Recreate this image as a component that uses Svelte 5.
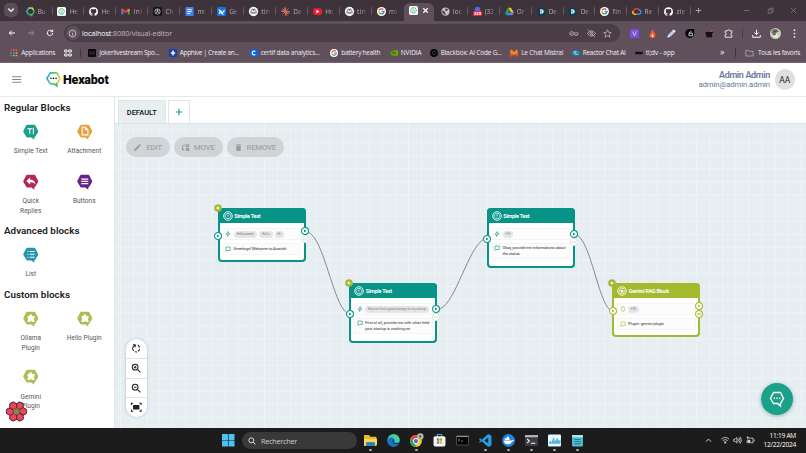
<script>
  // Spreads or tightens the letters so a label fills the given width.
  function fit(node, width) {
    const natural = node.getBoundingClientRect().width;
    const count = node.textContent.length;
    if (width && count) node.style.letterSpacing = `${(width - natural) / count}px`;
  }

  const tabs = [
    ['hexring', 'Bu'], ['hexfav', 'He'], ['github', 'He'], ['gmail', 'Inl'], ['gpt', 'Ch'],
    ['docs', 'mo'], ['bird', 'Ge'], ['ball', 'tin'], ['claude', 'Da'], ['youtube', 'Ho'],
    ['ball', 'tin'], ['google', 'mi'], ['hexfav', '', true], ['globe', 'loc'], ['badge', '(32'],
    ['drive', 'Or'], ['deep', 'De'], ['deep', 'De'], ['google', 'fin'], ['cloud', 'Re'], ['github', 'zie']
  ];

  const bookmarks = [
    ['apps', 'Applications', 54, 34],
    ['grid', '', 24, 0],
    ['joker', 'Jokerlivestream Spo...', 80.5, 60],
    ['apphive', 'Apphive | Create an...', 81, 59],
    ['certif', 'certif data analytics...', 80.5, 59],
    ['google', 'battery health', 59.5, 39],
    ['nvidia', 'NVIDIA', 40, 21],
    ['black', 'Blackbox: AI Code G...', 80.5, 61],
    ['mistral', 'Le Chat Mistral', 61.5, 42],
    ['reactor', 'Reactor Chat AI', 63, 43],
    ['tldv', 'tl;dv - app', 60, 29]
  ];

  const groups = [
    { title: 'Regular Blocks', width: 66.5, cls: 'regular', items: [
      ['Simple Text', '#1ba089', 'text'], ['Attachment', '#e6a23f', 'file'],
      ['Quick Replies', '#b5265d', 'reply'], ['Buttons', '#66218c', 'lines']
    ] },
    { title: 'Advanced blocks', width: 75.5, cls: 'advanced', items: [['List', '#2695ae', 'list']] },
    { title: 'Custom blocks', width: 66, cls: 'custom', items: [
      ['Ollama Plugin', '#a9c052', 'puzzle'], ['Hello Plugin', '#a9c052', 'puzzle'], ['Gemini Plugin', '#a9c052', 'puzzle']
    ] }
  ];

  const nodes = [
    { x: 217.5, y: 207.5, h: 54, title: 'Simple Text', tw: 26, chips: [['Hello avanish', 23.5, 17], ['Hello', 13.5, 7.5], ['Hi', 9, 3]], lines: [['Greetings! Welcome to Avanish', 53]], left: 28.5, right: 23.5, flag: true },
    { x: 349, y: 282.5, h: 60, title: 'Simple Text', tw: 26, chips: [['Help me find a good strategy for my startup', 64, 58]], lines: [['First of all, provide me with what field', 64], ['your startup is working on.', 46]], left: 31, right: 26.5, flag: true },
    { x: 486.5, y: 207.5, h: 60, title: 'Simple Text', tw: 26, chips: [['+20', 10.5, 5]], lines: [['Okay, provide me informations about', 63], ['the status.', 18]], left: 31, right: 26.5 },
    { x: 612, y: 282.5, h: 54, title: 'Gemini RAG Block', tw: 40, green: true, chips: [['+20', 10.5, 5]], lines: [['Plugin: gemini-plugin', 36]], left: 28, right: 23.5, flag: true }
  ];

  const pinned = ['folder', 'edge', 'chrome', 'store', 'cmd', 'vscode', 'docker', 'term', 'monitor', 'notes'];
  const running = ['folder', 'chrome', 'vscode', 'docker', 'term', 'monitor', 'notes'];
</script>

{#snippet icon(kind)}
  <svg class="ico" viewBox="0 0 24 24" aria-hidden="true">
    {#if kind === 'hexring'}
      <path d="M7 3h10l5 9-5 8h-2v3l-4-3H7l-5-8z" fill="none" stroke="#39b86b" stroke-width="3.5" />
      <path d="M7 3h10l3 5" fill="none" stroke="#d8d932" stroke-width="3.5" /><path d="M7 3 2 12l3 5" fill="none" stroke="#29a8d8" stroke-width="3.5" />
    {:else if kind === 'hexfav'}
      <rect width="24" height="24" rx="4" fill="#f6fbf8" /><path d="M8 5h8l4 7-4 6h-2v2l-3-2H8l-4-6z" fill="none" stroke="#35b68e" stroke-width="2" /><path d="M8 5h8l3 5" fill="none" stroke="#b8d334" stroke-width="2" /><path d="M8 11h8M9 14h6" stroke="#53b9d1" stroke-width="1.6" />
    {:else if kind === 'github'}
      <path fill="#fff" d="M12 .5a11.8 11.8 0 0 0-3.7 23c.6.1.8-.3.8-.6v-2.2c-3.3.7-4-1.4-4-1.4-.5-1.4-1.3-1.8-1.3-1.8-1-.7.1-.7.1-.7 1.2.1 1.8 1.2 1.8 1.2 1 1.8 2.8 1.3 3.5 1 .1-.8.4-1.3.8-1.6-2.7-.3-5.5-1.3-5.5-5.9 0-1.3.5-2.4 1.2-3.2-.1-.3-.5-1.5.1-3.2 0 0 1-.3 3.3 1.2a11.5 11.5 0 0 1 6 0c2.3-1.5 3.3-1.2 3.3-1.2.7 1.7.3 2.9.1 3.2.8.8 1.2 1.9 1.2 3.2 0 4.6-2.8 5.6-5.5 5.9.4.4.8 1.1.8 2.2v3.3c0 .3.2.7.8.6A11.8 11.8 0 0 0 12 .5z" />
    {:else if kind === 'gmail'}
      <path d="M1 5v15h5V9z" fill="#4285f4" /><path d="M23 5v15h-5V9z" fill="#34a853" /><path d="M1 4h4l7 6 7-6h4v4l-11 8L1 8z" fill="#ea4335" /><path d="M18 9l5-4v4l-5 4z" fill="#fbbc04" />
    {:else if kind === 'gpt'}
      <rect width="24" height="24" rx="5" fill="#161618" /><g fill="none" stroke="#ddd" stroke-width="1.7"><circle cx="12" cy="12" r="7" /><path d="M12 5v8l6 3M6 8l6 4-5 5M18 8l-6 4" /></g>
    {:else if kind === 'docs'}
      <rect x="1" y="0" width="22" height="24" rx="3" fill="#3f83ed" /><path d="M6 7h12M6 12h12M6 17h8" stroke="#fff" stroke-width="2.4" />
    {:else if kind === 'bird'}
      <rect width="24" height="24" rx="4" fill="#1475e1" /><path d="M3 5l8 4 3 4 6-7v6l-5 4 4 4h-5l-4-4-6 4 3-8z" fill="#fff" />
    {:else if kind === 'ball'}
      <circle cx="12" cy="12" r="12.500" fill="#f3f3f3" /><path d="M8 9V6h8v3l3 2v5H5v-5z" fill="none" stroke="#33333a" stroke-width="1.600" /><path d="M9 15h6M12 6v5" stroke="#33333a" stroke-width="1.500" />
    {:else if kind === 'claude'}
      <path d="M12 1v22M1 12h22M4 4l16 16M20 4 4 20M8 1l8 22M1 8l22 8" stroke="#d97757" stroke-width="2.200" />
    {:else if kind === 'youtube'}
      <rect y="3" width="24" height="18" rx="5" fill="#f01832" /><path d="m9 7 8 5-8 5z" fill="#fff" />
    {:else if kind === 'google'}
      <circle cx="12" cy="12" r="12" fill="#fff" /><g fill="none" stroke-width="3.500"><path d="M17 7A7 7 0 0 0 6 9" stroke="#ea4335" /><path d="M6 9a7 7 0 0 0 0 6" stroke="#fbbc04" /><path d="M6 15a7 7 0 0 0 10 2" stroke="#34a853" /><path d="M16 17a7 7 0 0 0 3-5h-7" stroke="#4285f4" /></g>
    {:else if kind === 'globe'}
      <circle cx="12" cy="12" r="11" fill="#c9c1c7" /><path d="M3 9l6 2 2 5 2 5-5-1-5-6zM12 3l7 3-4 5-4-2z" fill="#4b3f49" />
    {:else if kind === 'badge'}
      <circle cx="12" cy="7" r="7.500" fill="#3f70e8" /><rect y="10" width="24" height="14" rx="3" fill="#e3263b" /><text x="12" y="20.500" font-size="11" font-weight="700" text-anchor="middle" fill="#fff">329</text>
    {:else if kind === 'drive'}
      <path d="M8 2h8l8 13h-8z" fill="#fbbc04" /><path d="M8 2 0 16l4 6 8-13z" fill="#20a464" /><path d="M8 15h16l-4 7H4z" fill="#4285f4" />
    {:else if kind === 'deep'}
      <circle cx="12" cy="12" r="11.500" fill="#093f55" /><path d="M8 6h4a6 6 0 0 1 0 12H8z" fill="#d8f3fa" /><path d="M11 9v6" stroke="#093f55" stroke-width="2" />
    {:else if kind === 'cloud'}
      <path d="M6 18a5 5 0 0 1-1-9 8 8 0 0 1 14-1" fill="none" stroke="#ea4335" stroke-width="4" /><path d="M18 8a5 5 0 0 1 0 11h-6" fill="none" stroke="#4285f4" stroke-width="4" /><path d="M12 19H6a5 5 0 0 1-3-8" fill="none" stroke="#fbbc04" stroke-width="4" />
    {:else if kind === 'apps'}
      <path d="M1 1h5v5H1z" fill="#ea4335" /><path d="M9 1h5v5H9zM17 1h5v5h-5z" fill="#e35d4f" /><path d="M1 9h5v5H1zM1 17h5v5H1z" fill="#34a853" /><path d="M9 9h5v5H9z" fill="#4285f4" /><path d="M17 9h5v5h-5zM17 17h5v5h-5zM9 17h5v5H9z" fill="#e8a91b" />
    {:else if kind === 'grid'}
      <path d="M2 3h7v6H2zM14 3h8v6h-8zM2 15h7v6H2zM14 15h8v6h-8z" fill="none" stroke="#eee" stroke-width="3" />
    {:else if kind === 'joker'}
      <rect width="24" height="24" rx="3" fill="#0c0b0c" /><path d="M6 9h12v6H6z" fill="none" stroke="#5b5659" stroke-width="1.500" />
    {:else if kind === 'apphive'}
      <rect width="24" height="24" rx="4" fill="#193f9c" /><path d="M12 4v16M5 12h14" stroke="#fff" stroke-width="3" /><circle cx="12" cy="12" r="5" fill="#dbe8ff" />
    {:else if kind === 'certif'}
      <circle cx="12" cy="12" r="12" fill="#0766e8" /><path d="M16 8a5.500 5.500 0 1 0 0 8" fill="none" stroke="#fff" stroke-width="3.500" />
    {:else if kind === 'nvidia'}
      <path d="M0 12q6-9 15-8h9v16H9Q3 18 0 12" fill="#69a800" /><path d="M5 12q5-7 12-1-5 8-9 2 3-3 6-1" fill="none" stroke="#345415" stroke-width="2" />
    {:else if kind === 'black'}
      <circle cx="12" cy="12" r="12" fill="#080808" /><circle cx="12" cy="12" r="5" fill="none" stroke="#444" stroke-width="2" />
    {:else if kind === 'mistral'}
      <path d="M1 3h5l6 7 6-7h5v19h-6v-8l-5 5-5-5v8H1z" fill="#ff8518" /><path d="M1 15h6v7H1zM17 15h6v7h-6z" fill="#e9451d" />
    {:else if kind === 'reactor'}
      <ellipse cx="12" cy="12" rx="12" ry="8" fill="#2286b7" /><circle cx="9" cy="10" r="5" fill="#62c5e7" /><path d="M9 16h10" stroke="#bce9f5" stroke-width="2" />
    {:else if kind === 'tldv'}
      <path d="M0 8h24v8H0z" fill="#30242d" /><path d="M3 12h18" stroke="#090708" stroke-width="4" />
    {/if}
  </svg>
{/snippet}

{#snippet glyph(kind)}
  <g fill="none" stroke="#fff" stroke-width="1.600">
    {#if kind === 'text'}<path d="M6.500 7.500h8M10.500 7.500v8M16 6v10" />
    {:else if kind === 'file'}<path d="M8 5h5l4 4v8H8zM13 5v4h4" />
    {:else if kind === 'reply'}<path d="M5 11 11 5.500v3.500q7 0 8.500 7-3-3.500-8.500-3v3.500z" fill="#fff" stroke="none" />
    {:else if kind === 'lines'}<path d="M6.500 8h11M6.500 11.500h11M6.500 15h11" stroke-width="2" />
    {:else if kind === 'list'}<path d="M7 7h1.500M7 11.500h1.500M7 16h1.500M10.500 7H18M10.500 11.500H18M10.500 16H18" />
    {:else}<path d="M7 8h3V7a2 2 0 1 1 4 0v1h4v3.500a2 2 0 0 0 0 3.500v2h-4l-1.500-2-1.500 2H7v-3a2 2 0 0 0 0-3.500z" fill="#fff" stroke="none" />{/if}
  </g>
{/snippet}

{#snippet port(green, faint)}
  <svg class="port" viewBox="0 0 10 10">
    <circle cx="5" cy="5" r="3.500" fill="#fff" stroke={faint && !green ? '#dfe4e5' : green ? '#a5b92f' : '#079487'} stroke-width="1.050" />
    {#if faint}<path d="M3 5h4" stroke={green ? '#a5b92f' : '#c3c9ca'} stroke-width="1.200" stroke-dasharray={green ? 'none' : '1 .5'} />
    {:else}<path d="M4 3.400 6.500 5 4 6.600z" fill={green ? '#a5b92f' : '#079487'} />{/if}
  </svg>
{/snippet}

<div class="screen">
  <div class="tabstrip">
    <div class="chev"><svg viewBox="0 0 10 10"><path d="m3 4 2 2 2-2" /></svg></div>
    {#each tabs as [kind, label, active], i}
      <div class="tab" class:active class:nosep={i === 11 || active}>
        {@render icon(kind)}
        {#if active}<svg class="close" viewBox="0 0 10 10"><path d="m2.500 2.500 5 5m0-5-5 5" /></svg>{:else}<span use:fit={label.length > 2 ? 9 : 8}>{label}</span>{/if}
      </div>
    {/each}
    <svg class="plus" viewBox="0 0 10 10"><path d="M5 2v6M2 5h6" /></svg>
    <div class="win">
      <svg viewBox="0 0 10 10"><path d="M2 5h6" /></svg>
      <svg viewBox="0 0 10 10"><path d="M2.500 4h4v4h-4zM4 4V2.500h4v4H6.500" /></svg>
      <svg viewBox="0 0 10 10"><path d="m2 2 6 6m0-6L2 8" /></svg>
    </div>
  </div>

  <div class="toolbar">
    <svg class="nav" viewBox="0 0 24 24"><path d="M21 12H4m7-7-7 7 7 7" /></svg>
    <svg class="nav dim" viewBox="0 0 24 24"><path d="M3 12h17m-7-7 7 7-7 7" /></svg>
    <svg class="nav" viewBox="0 0 24 24"><path d="M20 12a8 8 0 1 1-2.500-6M20 2v6h-6" /></svg>
    <div class="address">
      <div class="info"><svg viewBox="0 0 24 24"><circle cx="12" cy="12" r="9" /><path d="M12 11v6M12 7v1.500" /></svg></div>
      <span class="url" use:fit={90}><b>localhost</b>:8080/visual-editor</span>
      <svg class="ai key" viewBox="0 0 30 24"><circle cx="8" cy="12" r="6" /><circle cx="8" cy="12" r="1.500" /><path d="M14 10h13v5h-3v3h-5v-3h-5" /></svg>
      <svg class="ai" viewBox="0 0 24 24"><path d="M1 12q11-14 22 0-11 14-22 0M3 2l18 20" /><circle cx="12" cy="12" r="4" /></svg>
      <svg class="ai" viewBox="0 0 24 24"><path d="m12 2 3 7 7 .6-5.400 4.800L18.500 22 12 17.800 5.500 22l1.900-7.600L2 9.600 9 9z" /></svg>
    </div>
    <div class="ext">
      <svg viewBox="0 0 24 24"><rect width="24" height="24" rx="3" fill="#7950dc" /><path d="m7 7 5 11 5-12" fill="none" stroke="#d9c9ff" stroke-width="2.500" /></svg>
      <svg viewBox="0 0 24 24"><path d="M12 0q1 7 6 9 5 14-6 15Q0 22 5 11q3 0 3-4 3-2 4-7" fill="#f15a38" /><path d="M12 12q6 8 0 11-6-3 0-11" fill="#ffd66b" /></svg>
      <svg viewBox="0 0 24 24"><path d="M2 22 5 15 14 6l4 4-9 9z" fill="#a9c5ff" stroke="#fff" stroke-width="2" /><path d="m14 4 6 6 3-4-5-5z" fill="#f5f5ff" /></svg>
      <svg viewBox="0 0 24 24"><path d="M12 0h10v12a12 12 0 1 1-10-12" fill="#050505" /><path d="M8 11h9v7H8zM10 11V8a3 3 0 0 1 5 0" fill="none" stroke="#fff" stroke-width="2" /></svg>
      <svg viewBox="0 0 24 24"><path d="M1 8h13l8-5v6l-3 2v11H4z" fill="#16110f" /><path d="M15 7q4-6 8-4l-4 5z" fill="#bd7a24" /></svg>
      <svg viewBox="0 0 24 24"><path d="M3 5h6q0-3 3-3t3 3h6v6q-3 0-3 3t3 3v5H3v-6q3 0 3-3t-3-3z" fill="none" stroke="#eee" stroke-width="2.400" /></svg>
      <i></i>
      <svg viewBox="0 0 24 24"><path d="M12 2v13m-6-6 6 6 6-6M2 16v6h20v-6" fill="none" stroke="#fff" stroke-width="2.600" /></svg>
      <svg class="face" viewBox="0 0 24 24"><circle cx="12" cy="12" r="12" fill="#c9cec1" /><path d="M4 5q9-8 16 3l-5 1-5 6-7-4z" fill="#6e765f" /><path d="m7 18 7-6 4 7-6 3z" fill="#eceddf" /><path d="M9 8h5M7 14l5 1" stroke="#37362f" stroke-width="2" /></svg>
      <svg viewBox="0 0 24 24"><g fill="#eee"><circle cx="12" cy="3" r="2.300" /><circle cx="12" cy="12" r="2.300" /><circle cx="12" cy="21" r="2.300" /></g></svg>
    </div>
  </div>

  <div class="bookmarks">
    {#each bookmarks as [kind, label, w, tw]}
      <div class="bm" class:bar={kind === 'grid'} style:width="{w}px">{@render icon(kind)}{#if label}<span use:fit={tw}>{label}</span>{/if}</div>
    {/each}
    <div class="more">»</div>
    <div class="favs"><svg viewBox="0 0 24 24"><path d="M1 4h8l3 3h11v14H1z" /></svg><span use:fit={42}>Tous les favoris</span></div>
  </div>

  <header>
    <svg class="burger" viewBox="0 0 10 10"><path d="M0 2h10M0 5h10M0 8h10" /></svg>
    <svg class="logo" viewBox="0 0 32 34">
      <defs><linearGradient id="lg" x1="0" y1="0.2" x2="1" y2="0.5"><stop offset="0" stop-color="#28a8e0" /><stop offset=".5" stop-color="#64c66b" /><stop offset="1" stop-color="#dadd2b" /></linearGradient></defs>
      <path d="M9 3h14l7 12-6 10h-1v6l-6-5H9L2 15z" fill="none" stroke="url(#lg)" stroke-width="3.600" />
      <path d="M23 25v6l-6-5h-5" fill="none" stroke="#3fbd9d" stroke-width="3" />
      <g fill="#050505"><circle cx="10.500" cy="14.500" r="1.700" /><circle cx="16" cy="14.500" r="1.700" /><circle cx="21.500" cy="14.500" r="1.700" /></g>
    </svg>
    <span class="brand" use:fit={45.5}>Hexabot</span>
    <div class="user"><strong use:fit={51}>Admin Admin</strong><span use:fit={71.5}>admin@admin.admin</span></div>
    <div class="avatar">AA</div>
  </header>

  <main>
    <aside>
      {#each groups as g}
        <section class={g.cls}>
          <h2><span use:fit={g.width}>{g.title}</span></h2>
          <div class="blocks">
            {#each g.items as [name, color, kind]}
              <div class="block">
                <svg viewBox="0 0 24 25"><path d="M6.500 1h11q1 0 1.500 1l4.300 8q.7 1.500 0 3L19 20l-1.500 1v3.500L13 21H6.500q-1 0-1.500-1L.7 13q-.7-1.500 0-3L5 2q.5-1 1.500-1" fill={color} />{@render glyph(kind)}</svg>
                <span>{name}</span>
              </div>
            {/each}
          </div>
        </section>
      {/each}
      <svg class="flower" viewBox="0 0 40 40">
        {#each [30, 90, 150, 210, 270, 330] as a}
          <path d="M20 21 12.500 8 15.500 1.500Q20-.5 24.500 1.500L27.500 8z" transform="rotate({a} 20 20)" fill="#f0445b" stroke="#46243f" stroke-width="1.800" stroke-linejoin="round" />
        {/each}
        <circle cx="20" cy="20" r="6.500" fill="#9aa648" stroke="#46243f" stroke-width="1.300" /><circle cx="20" cy="20" r="3" fill="none" stroke="#4d5030" stroke-width="1.500" />
      </svg>
    </aside>

    <div class="work">
      <div class="flowtabs"><div class="ftab"><span use:fit={30}>DEFAULT</span></div><div class="fadd"><svg viewBox="0 0 10 10"><path d="M5 1v8M1 5h8" /></svg></div></div>
      <div class="canvas">
        <div class="actions">
          <button style:width="44px"><svg viewBox="0 0 24 24"><path d="M3 17.300V21h3.700L18 9.900l-3.800-3.800zM20.700 7a1 1 0 0 0 0-1.400l-2.300-2.300a1 1 0 0 0-1.400 0L15 5l3.800 3.800z" /></svg><span use:fit={15.5}>EDIT</span></button>
          <button style:width="48.5px"><svg viewBox="0 0 24 24"><path d="M13 3h9v8h-9zm2 3v1h5V6zM13 13h9v8h-9zM11 4v3a5 5 0 0 0-5 8h3l-4 6-5-6h3A8 8 0 0 1 11 4" /></svg><span use:fit={21}>MOVE</span></button>
          <button style:width="57.5px"><svg viewBox="0 0 24 24"><path d="M6 8h12v11q0 2-2 2H8q-2 0-2-2zM5 4h4l1-1h4l1 1h4v2.500H5z" /></svg><span use:fit={29.5}>REMOVE</span></button>
        </div>

        <svg class="edges" viewBox="115 124 691 304">
          <path d="M308 232C324 238 333 304 347 313M440 309C456 302 468 248 484 239M577 235C591 243 598 300 610 310" />
        </svg>

        {#each nodes as n}
          <article class="node" class:green={n.green} style:left="{n.x - 115}px" style:top="{n.y - 124}px" style:height="{n.h}px">
            <div class="nhead">
              <svg viewBox="0 0 20 20"><circle cx="10" cy="10" r="8.500" fill="none" stroke="#fff" stroke-width="1.800" /><path d="M7 5h6l3 5-3 5H7l-3-5z" fill="none" stroke="#fff" stroke-width="1.300" />{#if n.green}<path d="M7 8h6l-1 2 1 3H8z" fill="#fff" />{:else}<path d="M7.500 8h5M10 8v5" stroke="#fff" />{/if}</svg>
              <span use:fit={n.tw}>{n.title}</span>
            </div>
            <div class="row">
              <svg viewBox="0 0 12 12"><path d={n.green ? 'M4 1.500h4l2 4.500-2 4.500H4L2 6z' : 'M6.500 1 2 6.800h3.200L5 11l5-5.800H6.800z'} /></svg>
              {#each n.chips as [t, w, tw]}<div class="chip" style:width="{w}px"><span use:fit={tw}>{t}</span></div>{/each}
            </div>
            <div class="row msg" class:two={n.lines.length > 1}>
              <svg viewBox="0 0 12 12"><path d="M2 2h8.500v7H4L2 11z" /></svg>
              <div>{#each n.lines as [t, w]}<p><span use:fit={w}>{t}</span></p>{/each}</div>
            </div>
            <div class="pin" style:left="0.5px" style:top="{n.left}px">{@render port(n.green, false)}</div>
            <div class="pin" style:left="87px" style:top="{n.right + 8.3}px">{@render port(n.green, true)}</div>
            <div class="pin" style:left="87px" style:top="{n.right}px">{@render port(n.green, false)}</div>
            {#if n.flag}<svg class="flag" viewBox="0 0 10 10"><circle cx="5" cy="5" r="4.800" fill="#a5b936" /><path d="m3.500 3 4 2-4 2z" fill="#fff" /></svg>{/if}
          </article>
        {/each}

        <div class="zoom">
          <div><svg viewBox="0 0 24 24"><path d="M15.500 4.700a8 8 0 0 1 4 6M19.600 14a8 8 0 0 1-3.500 5M13.500 20.400a8 8 0 0 1-5-.7M6 18a8 8 0 0 1 2.500-12.700M5 3.500l5.500 1.300L8.500 10" /></svg></div>
          <div><svg viewBox="0 0 24 24"><circle cx="9.500" cy="9.500" r="6.500" /><path d="m14.500 14.500 7 7M6.500 9.500h6M9.500 6.500v6" /></svg></div>
          <div><svg viewBox="0 0 24 24"><circle cx="9.500" cy="9.500" r="6.500" /><path d="m14.500 14.500 7 7M6.500 9.500h6" /></svg></div>
          <div><svg viewBox="0 0 24 24"><path d="M1 7V3h4M19 3h4v4M1 17v4h4M19 21h4v-4" /><path d="M6 8h12v8H6z" fill="#202225" /></svg></div>
        </div>
        <div class="chat"><svg viewBox="0 0 32 34"><path d="M9 3h14l6 12-6 10v5l-6-5H9L3 15z" /><path d="M9.500 14.500h2.500M14.700 14.500h2.600M20 14.500h2.500" /></svg></div>
      </div>
    </div>
  </main>

  <footer>
    <svg class="start" viewBox="0 0 24 24"><path d="M0 0h11.400v11.400H0zM12.600 0H24v11.400H12.600zM0 12.600h11.400V24H0zM12.600 12.600H24V24H12.600z" fill="#4cc2f5" /></svg>
    <div class="search"><svg viewBox="0 0 24 24"><circle cx="10" cy="10" r="7.500" /><path d="m15.500 15.500 7 7" /></svg><span use:fit={36}>Rechercher</span></div>
    <div class="pins">
      {#each pinned as p}
        <div class="app" class:on={running.includes(p)}>
          <svg viewBox="0 0 24 24">
            {#if p === 'folder'}<path d="M0 2h9l3 3h11v17H0z" fill="#eeb52e" /><path d="M0 9h24v11H0z" fill="#ffd65a" /><path d="M4 15h16v7H4z" fill="#2380c7" />
            {:else if p === 'edge'}<circle cx="12" cy="12" r="11.500" fill="#1687cf" /><path d="M1 10C3-3 23-3 23.500 11c0 5-6 6-9 4 3-6-7-9-13.500-5" fill="#46cf9b" /><path d="M1 10q7-7 11-2-5 4-1 9 5 5 10 2-8 8-16 1Q0 16 1 10" fill="#1677c5" /><path d="M12 10q-3 4 1 7 4 2 8 0" fill="none" stroke="#132d45" stroke-width="2" />
            {:else if p === 'chrome'}<circle cx="11" cy="13" r="11" fill="#fbc52c" /><path d="M1.500 7.500A11 11 0 0 1 20.500 7.500H11L6 16z" fill="#e54335" /><path d="M1.500 7.500 7 16l5 8A11 11 0 0 1 1.500 7.500" fill="#2fa650" /><circle cx="11" cy="13" r="5.300" fill="#fff" /><circle cx="11" cy="13" r="4" fill="#3979e5" /><circle cx="19" cy="4.500" r="6" fill="#b9b9ae" /><path d="m16 3 3-2 3 4-4 3z" fill="#6d6a5c" />
            {:else if p === 'store'}<path d="M8 5V1h8v4" fill="none" stroke="#35aee8" stroke-width="2" /><rect x="1" y="4" width="22" height="19" rx="3" fill="#f6f6f6" /><path d="M7 8h4.500v4.500H7z" fill="#ef4e24" /><path d="M12.500 8H17v4.500h-4.500z" fill="#7cb829" /><path d="M7 13.500h4.500V18H7z" fill="#229ee2" /><path d="M12.500 13.500H17V18h-4.500z" fill="#f4b71c" />
            {:else if p === 'cmd'}<path d="M1 3.500h22v17H1z" fill="#050505" stroke="#66686b" stroke-width="1.200" /><path d="M1 3.500h22v2.200H1z" fill="#8b8d8f" /><path d="m4 9 3 2-3 2M9 13h4" fill="none" stroke="#aaa" stroke-width="1.300" />
            {:else if p === 'vscode'}<path d="m17 0 6 3v18l-6 3L5 13.500 2 16l-2-1.500L3 12 0 9.500 2 8l3 2.500zm0 7-7 5 7 5z" fill="#21a0e8" />
            {:else if p === 'docker'}<circle cx="12" cy="12" r="12" fill="#2380e6" /><path d="M3 12h15l3-2 1 3-3 1q-3 6-9 5-6 0-7-7M5 8h9v3H5zM9 5h4v3H9z" fill="#fff" />
            {:else if p === 'term'}<rect y="2" width="24" height="20" rx="2" fill="#3b3d42" /><path d="M0 2h24v4H0z" fill="#b5b7ba" /><path d="m4 9 4 4-4 4M11 17h8" fill="none" stroke="#fff" stroke-width="2" />
            {:else if p === 'monitor'}<rect y="1" width="24" height="22" rx="2" fill="#e5f5fc" /><path d="M1 18l3-6 3 3 3-10 3 9 4-7 3 6 3-3v8H1z" fill="#55b4dc" />
            {:else}<rect x="2" y="2" width="20" height="21" rx="2" fill="#52bed3" /><path d="M2 2h20v4H2z" fill="#b9e6ef" /><path d="M6 10h12M6 14h12M6 18h12" stroke="#176b82" stroke-width="1.500" />{/if}
          </svg>
        </div>
      {/each}
    </div>
    <div class="tray">
      <svg viewBox="0 0 24 24"><path d="m3 17 9-9 9 9" /></svg>
      <svg viewBox="0 0 24 24"><path d="M1 9q11-10 22 0M5 13q7-6 14 0M9 17q3-2 6 0" /><path d="M10 18h4l-2 3z" /></svg>
      <svg viewBox="0 0 24 24"><path d="M2 9h4l5-5v16l-5-5H2zM14 8q3 4 0 8M17 5q6 7 0 14M20 2q8 10 0 20" /></svg>
      <svg viewBox="0 0 24 24"><path d="M8 6h12v13H3v-7M23 10v5M5 1v9M2 4h6" /><path d="M6 12h5v5H6z" fill="#fff" /></svg>
    </div>
    <div class="clock"><span use:fit={26.5}>11:19 AM</span><span use:fit={32.5}>12/22/2024</span></div>
  </footer>
</div>

<style>
  :global(body) { margin: 0; }
  * { box-sizing: border-box; }
  .screen { width: 806px; height: 453px; overflow: hidden; display: flex; flex-direction: column; font-family: "Open Sans", sans-serif; background: #fff; white-space: nowrap; }
  svg { flex: none; display: block; overflow: visible; }
  span { flex: none; }
  .ico { width: 9px; height: 9px; }

  .tabstrip { height: 21px; flex: none; display: flex; background: #3e333b; padding-left: 4px; color: #bcb1b9; font-size: 6.5px; }
  .chev { width: 14px; height: 14px; margin: 3px 6.5px 0 0; border-radius: 5px; background: #5b4c57; flex: none; }
  .chev svg, .close, .plus, .win svg { fill: none; stroke: #ddd5db; stroke-width: 1.2; }
  .chev svg { width: 14px; height: 14px; }
  .tab { width: 31.95px; flex: none; height: 14px; margin-top: 4px; padding-left: 1px; display: flex; align-items: center; gap: 3.2px; position: relative; }
  .tab span { background: linear-gradient(90deg, #c6bbc3 45%, #6c5f69); background-clip: text; color: transparent; }
  .tab::after { content: ""; position: absolute; left: 27px; top: 3px; width: 1px; height: 8px; background: #655862; }
  .tab.nosep::after { display: none; }
  .tab.active { width: 29.95px; height: 18px; margin: 3px 6px 0 -4px; padding: 0 0 3px 5px; background: #5f505b; border-radius: 6px 6px 0 0; gap: 3px; }
  .close { width: 9px; height: 9px; stroke: #fff; }
  .plus { width: 9px; height: 9px; margin: 6px 0 0 -1px; stroke: #b6abb3; stroke-width: 1; }
  .win { display: flex; gap: 14.5px; margin: 6px 0 0 auto; padding-right: 8px; }
  .win svg { width: 9px; height: 9px; stroke: #83747f; stroke-width: .9; }

  .toolbar { height: 24px; flex: none; display: flex; align-items: center; background: #5f505b; padding-left: 7.5px; }
  .nav { width: 8px; height: 8px; margin-right: 11px; fill: none; stroke: #fff; stroke-width: 3; }
  .nav.dim { stroke: #978a94; }
  .address { height: 18px; width: 556px; border-radius: 9px; background: #4b3e47; display: flex; align-items: center; padding: 0 7.5px 0 2px; margin-left: -1px; color: #c3b6be; font-size: 7.2px; }
  .address b { color: #fff; font-weight: 400; }
  .info { width: 14px; height: 14px; border-radius: 7px; background: #5f505b; margin-right: 2.5px; display: grid; place-items: center; }
  .info svg { width: 9px; height: 9px; stroke: #e6dce3; stroke-width: 2; fill: none; }
  .ai { width: 9px; height: 9px; fill: none; stroke: #c9bec6; stroke-width: 2; margin-left: 7.5px; }
  .ai.key { width: 10px; margin-left: auto; }
  .ext { display: flex; align-items: center; flex: 1; padding-left: 10px; gap: 9.95px; }
  .ext svg { width: 9px; height: 9px; }
  .ext i { width: 1px; height: 9px; background: #46393f; margin: 0 -1px; }
  .ext .face { width: 11px; height: 11px; margin: 0 -1px; }

  .bookmarks { height: 18px; flex: none; display: flex; align-items: center; background: #5f505b; border-bottom: 1px solid #78616f; padding: 0 6px 1.5px 10px; color: #f2edf1; font-size: 6.5px; }
  .bm { display: flex; align-items: center; gap: 3.2px; flex: none; position: relative; }
  .bm .ico { width: 8px; height: 8px; }
  .bm.bar::after { content: ""; position: absolute; left: 16px; width: 1px; height: 8px; background: #40333b; }
  .more { margin-left: 25.5px; font-size: 9px; line-height: 8px; padding-bottom: 2px; }
  .favs { margin-left: auto; display: flex; align-items: center; gap: 4px; padding-left: 9px; border-left: 1px solid #40333b; height: 9px; }
  .favs svg { width: 9px; height: 8px; fill: none; stroke: #c8bec5; stroke-width: 2; }

  header { height: 34px; flex: none; display: flex; align-items: center; padding: 0 11px 0 12px; font-family: Roboto, sans-serif; border-bottom: 1px solid #e7e9ea; }
  .burger { width: 9.5px; height: 9px; stroke: #858585; stroke-width: 1.2; }
  .logo { width: 15px; height: 17px; margin: 0 2px 0 24.5px; }
  .brand { font-size: 12.5px; font-weight: 900; color: #0d0d0f; }
  .user { margin-left: auto; display: flex; flex-direction: column; align-items: flex-end; color: #667798; font-size: 7.7px; line-height: 9.5px; margin-right: 4.5px; padding-top: 1px; }
  .user strong { font-size: 9px; font-weight: 600; }
  .avatar { width: 20.5px; height: 20.5px; border-radius: 50%; background: #e0e0e0; display: grid; place-items: center; font-size: 8.5px; color: #222; }

  main { display: flex; height: 331px; flex: none; font-family: Roboto, sans-serif; }
  aside { width: 115px; flex: none; border-right: 1px solid #e2e5e6; overflow: hidden; position: relative; color: #555; }
  h2 { margin: 0 0 0 4px; font-size: 9.8px; line-height: 12px; height: 12px; color: #202020; font-weight: 600; }
  section { padding-top: 5px; }
  .regular { height: 123px; }
  .advanced { height: 64px; }
  .custom { height: 144px; }
  .blocks { display: flex; flex-wrap: wrap; padding: 9.5px 0 0 4px; row-gap: 0; }
  .block { width: 53.5px; height: 50px; display: flex; flex-direction: column; align-items: center; }
  .block svg { width: 15.5px; height: 16px; margin-bottom: 7.7px; }
  .block span { white-space: normal; text-align: center; font-size: 6.5px; line-height: 9.5px; width: 36px; letter-spacing: .03px; }
  .custom .block { height: 58.5px; }
  .flower { position: absolute; left: 6px; top: 303.5px; width: 21px; height: 21px; }

  .work { flex: 1; display: flex; flex-direction: column; }
  .flowtabs { height: 27px; flex: none; display: flex; gap: 2px; padding: 3px 0 0 2.5px; border-bottom: 1px solid #dbe2e4; }
  .ftab { width: 48.5px; background: #e8eff1; border: 1px solid #dfe6e8; border-bottom: 0; display: grid; place-items: center; font-size: 7.5px; font-weight: 500; color: #111; }
  .fadd { width: 22px; border: 1px solid #e2e6e8; border-bottom: 0; display: grid; place-items: center; }
  .fadd svg { width: 8px; height: 8px; stroke: #1ba089; stroke-width: 1.4; }
  .canvas { flex: 1; position: relative; overflow: hidden; background-color: #e6eef2; background-image: linear-gradient(90deg, #eff4f6 1px, transparent 1px), linear-gradient(#eff4f6 1px, transparent 1px); background-size: 13.1px 13.1px; background-position: 5px 5px; }
  .actions { display: flex; gap: 4px; padding: 13px 0 0 11px; }
  .actions button { height: 20px; border: 0; border-radius: 10px; background: #d0d4d6; color: #a1a5a7; font: 500 7.9px Roboto, sans-serif; display: flex; align-items: center; justify-content: center; gap: 4px; padding: 0 1px 0 0; }
  .actions svg { width: 9px; height: 9px; fill: #999d9f; }

  .edges { position: absolute; inset: 0; width: 691px; height: 304px; fill: none; stroke: #858b8e; stroke-width: 1; }
  .node { position: absolute; width: 88px; background: #fff; border: 1.7px solid #079487; border-width: 0 2px 2px; border-radius: 4px; }
  .nhead { height: 15.5px; margin: 0 -2px 5px; border-radius: 4px 4px 0 0; background: #079487; color: #fff; display: flex; align-items: center; gap: 1.8px; padding: 1px 0 0 5px; font-size: 5.4px; font-weight: 700; }
  .nhead svg { width: 10px; height: 10px; }
  .row { margin: 0 2.5px 3px 3px; height: 12px; border: 1px solid #f3f5f5; background: #fcfcfc; border-radius: 1px; display: flex; align-items: center; padding-left: 1.5px; gap: 2px; }
  .row > svg { width: 6px; height: 6px; fill: none; stroke: #079487; stroke-width: 1.2; margin-right: .5px; }
  .chip { height: 7px; border-radius: 4px; background: #e4e5e6; display: grid; place-items: center; font-size: 2.9px; color: #777; }
  .msg { font-size: 4.1px; color: #333; line-height: 6px; }
  .msg.two { height: 15.5px; align-items: flex-start; padding-top: 1px; }
  .msg p { margin: 0; height: 6px; display: flex; }
  .green { border-color: #a5b92f; }
  .green .nhead { background: #a5b92f; }
  .green .row > svg { stroke: #a5b92f; }
  .pin { position: absolute; width: 0; height: 0; margin-left: -2px; }
  .port { position: absolute; left: -5px; top: -5px; width: 10px; height: 10px; }
  .flag { position: absolute; left: -6px; top: -4px; width: 8px; height: 8px; }

  .zoom { position: absolute; left: 11px; top: 215px; width: 21px; height: 78px; border-radius: 10.5px; background: #fff; box-shadow: 0 0 3px #aebbc0; display: flex; flex-direction: column; }
  .zoom div { flex: 1; display: grid; place-items: center; border-bottom: 1px solid #e0e3e4; }
  .zoom div:last-child { border: 0; }
  .zoom svg { width: 10.5px; height: 10.5px; fill: none; stroke: #202225; stroke-width: 2.4; }
  .chat { position: absolute; left: 646px; top: 259px; width: 32px; height: 32px; border-radius: 50%; background: #1ba089; box-shadow: 0 1px 4px #91b8b4; display: grid; place-items: center; }
  .chat svg { width: 16px; height: 17px; fill: none; stroke: #fff; stroke-width: 2.8; }

  footer { height: 25px; flex: none; background: #1c1c1c; display: flex; align-items: center; padding-left: 222px; color: #fff; }
  .start { width: 12.5px; height: 12.5px; }
  .search { width: 115px; height: 17px; border-radius: 9px; background: #393939; margin-left: 7.5px; display: flex; align-items: center; gap: 5px; padding-left: 6px; color: #cfcfcf; font-size: 7.2px; }
  .search svg { width: 8px; height: 8px; fill: none; stroke: #fff; stroke-width: 2.5; }
  .pins { display: flex; margin-left: 1.5px; }
  .app { width: 23.1px; height: 25px; display: grid; place-items: center; position: relative; }
  .app svg { width: 13px; height: 13px; }
  .app.on::after { content: ""; position: absolute; bottom: 2.5px; left: 10px; width: 3px; height: 1.5px; border-radius: 1px; background: #aaa; }
  .tray { margin-left: auto; display: flex; gap: 4px; align-items: center; }
  .tray svg { width: 8.5px; height: 8.5px; fill: none; stroke: #eee; stroke-width: 2; }
  .tray svg:first-child { width: 7px; margin-right: 5px; stroke-width: 3; }
  .clock { margin: 0 10px 0 9px; width: 33px; display: flex; flex-direction: column; align-items: flex-end; font-size: 6.6px; line-height: 8.3px; }
</style>
